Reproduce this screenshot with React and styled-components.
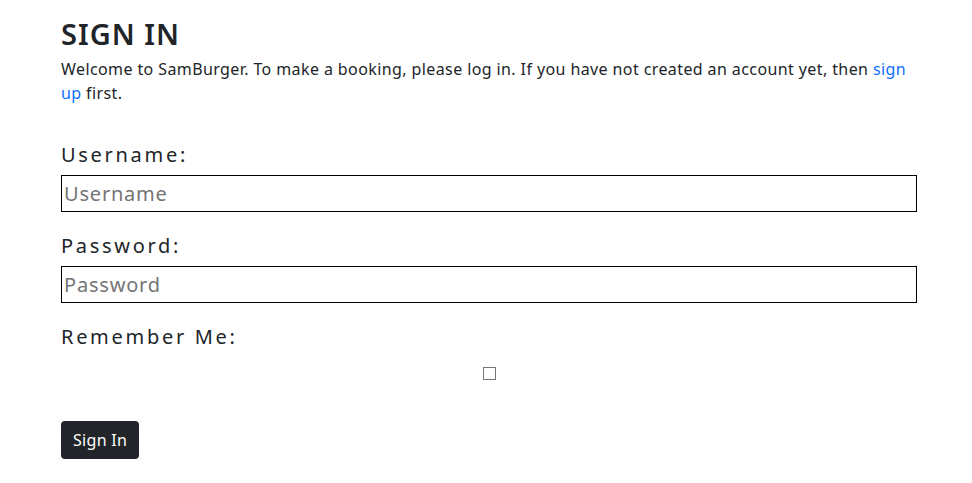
import React from "react";
import styled, { createGlobalStyle } from "styled-components";

const Global = createGlobalStyle`
  html, body { margin: 0; padding: 0; background: #fff; }
  body { font-family: "Noto Sans", "Open Sans", sans-serif; color: #212529; }
  * { box-sizing: border-box; }
`;

const Page = styled.main`
  padding: 14px 55px 20px 61px;
`;

const Title = styled.h1`
  margin: 0;
  font-size: 29px;
  font-weight: 600;
  letter-spacing: 1px;
  line-height: 40px;
  color: #212529;
`;

const Intro = styled.p`
  margin: 3px 0 0;
  font-size: 16px;
  letter-spacing: 0.4px;
  line-height: 24px;
  color: #212529;
`;

const Link = styled.a`
  color: #0d6efd;
  text-decoration: none;
`;

const Form = styled.form`
  margin-top: 35px;
  display: flex;
  flex-direction: column;
`;

const Label = styled.label`
  font-size: 20px;
  letter-spacing: 2.7px;
  line-height: 30px;
  margin-bottom: 5px;
`;

const Input = styled.input`
  width: 100%;
  height: 37px;
  border: 1px solid #000;
  border-radius: 0;
  padding: 0 2px;
  font-family: inherit;
  font-size: 20px;
  letter-spacing: 0.8px;
  color: #212529;
  margin-bottom: 19px;
  &::placeholder { color: #757575; }
`;

const CheckRow = styled.div`
  display: flex;
  justify-content: center;
  padding: 10px 0 41px;
`;

const Check = styled.input`
  appearance: none;
  width: 13px;
  height: 13px;
  margin: 0;
  border: 1px solid #767676;
  background: #fff;
  border-radius: 0;
  &:checked { background: #0d6efd; border-color: #0d6efd; }
`;

const Button = styled.button`
  align-self: flex-start;
  background: #212529;
  color: #fff;
  border: none;
  border-radius: 4px;
  padding: 0 12px;
  height: 38px;
  font-family: inherit;
  font-size: 16px;
  letter-spacing: 0.3px;
`;

export default function App() {
  return (
    <>
      <Global />
      <Page>
        <Title>SIGN IN</Title>
        <Intro>
          Welcome to SamBurger. To make a booking, please log in. If you have not created an account yet, then{" "}
          <Link href="#">sign up</Link> first.
        </Intro>
        <Form onSubmit={(e) => e.preventDefault()}>
          <Label htmlFor="u">Username:</Label>
          <Input id="u" placeholder="Username" />
          <Label htmlFor="p">Password:</Label>
          <Input id="p" type="password" placeholder="Password" />
          <Label htmlFor="r">Remember Me:</Label>
          <CheckRow>
            <Check id="r" type="checkbox" />
          </CheckRow>
          <Button type="submit">Sign In</Button>
        </Form>
      </Page>
    </>
  );
}
